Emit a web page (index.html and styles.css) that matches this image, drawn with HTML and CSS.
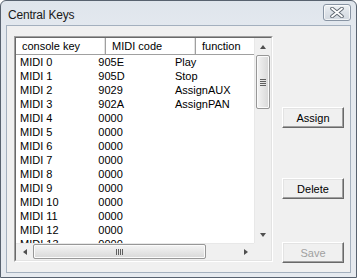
FILE: index.html
```html
<!DOCTYPE html>
<html>
<head>
<meta charset="utf-8">
<link rel="stylesheet" href="styles.css">
</head>
<body>
<div class="window">
  <div class="titlebar">
    <span class="title">Central Keys</span>
    <div class="close">
      <svg width="14" height="11" viewBox="0 0 14 11">
        <path d="M2 1.5 L12 9.5 M12 1.5 L2 9.5" stroke="#5e6670" stroke-width="3.6" stroke-linecap="round"/>
        <path d="M2 1.5 L12 9.5 M12 1.5 L2 9.5" stroke="#ffffff" stroke-width="1.8" stroke-linecap="round"/>
      </svg>
    </div>
  </div>
  <div class="client">
    <div class="list">
      <div class="list-in">
        <div class="view">
          <div class="header">
            <div class="hc c1">console key</div>
            <div class="hc c2">MIDI code</div>
            <div class="hc c3">function</div>
          </div>
          <div class="row"><span class="c1">MIDI 0</span><span class="c2">905E</span><span class="c3">Play</span></div>
          <div class="row"><span class="c1">MIDI 1</span><span class="c2">905D</span><span class="c3">Stop</span></div>
          <div class="row"><span class="c1">MIDI 2</span><span class="c2">9029</span><span class="c3">AssignAUX</span></div>
          <div class="row"><span class="c1">MIDI 3</span><span class="c2">902A</span><span class="c3">AssignPAN</span></div>
          <div class="row"><span class="c1">MIDI 4</span><span class="c2">0000</span><span class="c3"></span></div>
          <div class="row"><span class="c1">MIDI 5</span><span class="c2">0000</span><span class="c3"></span></div>
          <div class="row"><span class="c1">MIDI 6</span><span class="c2">0000</span><span class="c3"></span></div>
          <div class="row"><span class="c1">MIDI 7</span><span class="c2">0000</span><span class="c3"></span></div>
          <div class="row"><span class="c1">MIDI 8</span><span class="c2">0000</span><span class="c3"></span></div>
          <div class="row"><span class="c1">MIDI 9</span><span class="c2">0000</span><span class="c3"></span></div>
          <div class="row"><span class="c1">MIDI 10</span><span class="c2">0000</span><span class="c3"></span></div>
          <div class="row"><span class="c1">MIDI 11</span><span class="c2">0000</span><span class="c3"></span></div>
          <div class="row"><span class="c1">MIDI 12</span><span class="c2">0000</span><span class="c3"></span></div>
          <div class="row"><span class="c1">MIDI 13</span><span class="c2">0000</span><span class="c3"></span></div>
        </div>
        <div class="vscroll">
          <div class="sbtn"><span class="tri up"></span></div>
          <div class="vtrack">
            <div class="vthumb"><span class="grip-v"></span></div>
          </div>
          <div class="sbtn"><span class="tri down"></span></div>
        </div>
        <div class="hscroll">
          <div class="sbtn"><span class="tri left"></span></div>
          <div class="htrack">
            <div class="hthumb"><span class="grip-h"></span></div>
          </div>
          <div class="sbtn"><span class="tri right"></span></div>
        </div>
        <div class="corner"></div>
      </div>
    </div>
    <div class="side">
      <button class="btn assign">Assign</button>
      <button class="btn delete">Delete</button>
      <button class="btn save" disabled>Save</button>
    </div>
  </div>
</div>
</body>
</html>
```

FILE: styles.css
```css
* { box-sizing: border-box; }
html, body { margin: 0; padding: 0; background: #ffffff; }
body { font-family: "Liberation Sans", Arial, sans-serif; font-size: 11px; color: #000; }

.window {
  width: 357px;
  height: 278px;
  border: 1px solid #58626f;
  border-radius: 6px 6px 0 0;
  background: linear-gradient(#dfe5ec, #e4e9ef 30px, #e6eaef);
  padding: 0 5px 4px 5px;
  display: flex;
  flex-direction: column;
}

.titlebar {
  height: 25px;
  display: flex;
  align-items: flex-start;
  justify-content: space-between;
}
.title {
  font-size: 12px;
  padding-left: 2px;
  margin-top: 7px;
  color: #1a1a1a;
  letter-spacing: -0.2px;
}
.close {
  width: 28px;
  height: 17px;
  margin-top: 3px;
  border: 1px solid #8894a3;
  border-radius: 3px;
  background: linear-gradient(#eef1f4, #dde2e8 50%, #d3d9e0);
  box-shadow: inset 0 0 0 1px rgba(255,255,255,0.7);
  display: flex;
  align-items: center;
  justify-content: center;
}

.client {
  flex: 1;
  border: 1px solid #a4b0be;
  background: #f0f0f0;
  display: flex;
  padding: 10px 6px 9px 7px;
}

.list {
  width: 259px;
  height: 226px;
  border: 1px solid;
  border-color: #a0a0a0 #ffffff #ffffff #a0a0a0;
}
.list-in {
  width: 100%;
  height: 100%;
  border: 1px solid;
  border-color: #696969 #e3e3e3 #e3e3e3 #696969;
  background: #fff;
  display: grid;
  grid-template-columns: 238px 17px;
  grid-template-rows: 205px 17px;
}

.view {
  overflow: hidden;
  white-space: nowrap;
}
.header {
  display: flex;
  height: 17px;
  width: 300px;
}
.hc {
  height: 17px;
  line-height: 16px;
  padding-left: 6px;
  background: #ffffff;
  box-shadow: inset -1px -1px 0 #a0a0a0, inset -2px 0 0 #e3e3e3;
}
.header .c1 { width: 90px; }
.header .c2 { width: 90px; }
.header .c3 { width: 62px; }

.row {
  display: flex;
  height: 14px;
  line-height: 14px;
}
.row .c1 { width: 90px; padding-left: 4px; }
.row .c2 { width: 90px; padding-left: 6px; }
.row .c3 { width: 100px; padding-left: 6px; }

.vscroll {
  display: flex;
  flex-direction: column;
  background: #f0f0f0;
  border-left: 1px solid #e8e8e8;
}
.hscroll {
  display: flex;
  background: #f0f0f0;
  border-top: 1px solid #e8e8e8;
}
.corner { background: #f0f0f0; }

.sbtn {
  width: 17px;
  height: 17px;
  flex: none;
  display: flex;
  align-items: center;
  justify-content: center;
}
.hscroll .sbtn { height: 16px; }
.vscroll .sbtn { width: 16px; }

.tri { width: 0; height: 0; border-style: solid; border-color: transparent; }
.tri.up { border-width: 0 3.5px 4px 3.5px; border-bottom-color: #505050; }
.tri.down { border-width: 4px 3.5px 0 3.5px; border-top-color: #505050; }
.tri.left { border-width: 3.5px 4px 3.5px 0; border-right-color: #505050; }
.tri.right { border-width: 3.5px 0 3.5px 4px; border-left-color: #505050; }

.vtrack { flex: 1; padding: 0 1px 0 1px; }
.vthumb {
  height: 54px;
  width: 14px;
  border: 1px solid #979797;
  border-radius: 2px;
  background: linear-gradient(90deg, #f4f4f4, #e6e6e6 50%, #d8d8d8);
  box-shadow: inset 0 0 0 1px #fbfbfb;
  display: flex;
  align-items: center;
  justify-content: center;
}
.grip-v {
  width: 6px;
  height: 7px;
  background: repeating-linear-gradient(#5f5f5f 0 1px, transparent 1px 2px);
}

.htrack { flex: 1; }
.hthumb {
  width: 173px;
  height: 15px;
  border: 1px solid #979797;
  border-radius: 2px;
  background: linear-gradient(#f4f4f4, #e6e6e6 50%, #d8d8d8);
  box-shadow: inset 0 0 0 1px #fbfbfb;
  display: flex;
  align-items: center;
  justify-content: center;
}
.grip-h {
  width: 7px;
  height: 6px;
  background: repeating-linear-gradient(90deg, #5f5f5f 0 1px, transparent 1px 2px);
}

.side {
  display: flex;
  flex-direction: column;
  margin-left: 9px;
  padding-top: 71px;
}
.btn {
  width: 62px;
  height: 21px;
  padding: 0;
  font-family: "Liberation Sans", Arial, sans-serif;
  font-size: 11px;
  color: #000;
  background: #f0f0f0;
  border: 1px solid;
  border-color: #ffffff #696969 #696969 #ffffff;
  box-shadow: inset -1px -1px 0 #a0a0a0, inset 1px 1px 0 #e3e3e3;
  border-radius: 0;
}
.btn.delete { margin-top: 50px; }
.btn.save { margin-top: 43px; color: #a0a0a0; }
```
